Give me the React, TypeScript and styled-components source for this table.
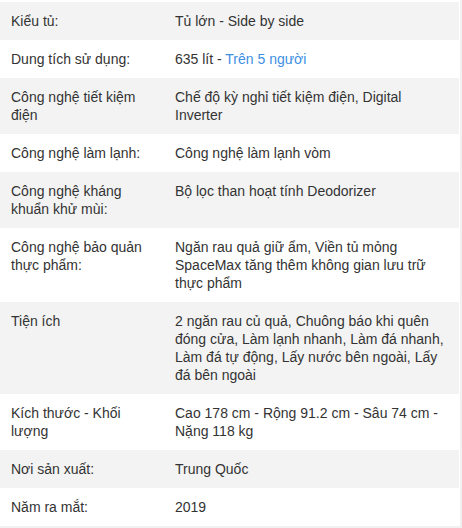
import React from "react";
import styled, { createGlobalStyle } from "styled-components";

const Global = createGlobalStyle`
  html, body { margin: 0; padding: 0; background: #f1f1f1; }
  body { font-family: "Liberation Sans", Arial, sans-serif; }
`;

const Wrapper = styled.div`
  width: 460px;
  padding-top: 2px;
  background: #ffffff;
`;

const Table = styled.ul`
  list-style: none;
  margin: 0;
  padding: 0;
  width: 459px;
`;

const Row = styled.li<{ $shaded: boolean }>`
  display: grid;
  grid-template-columns: 175px 1fr;
  background: ${(p) => (p.$shaded ? "#f3f3f3" : "#ffffff")};
  font-size: 14px;
  line-height: 18px;
  color: #333333;
`;

const Label = styled.div`
  padding: 10px 25px 10px 11px;
`;

const Value = styled.div`
  padding: 10px 10px 10px 0;
`;

const Link = styled.a`
  color: #3d8fe3;
  text-decoration: none;
`;

const rows: { label: string; value: React.ReactNode }[] = [
  { label: "Kiểu tủ:", value: "Tủ lớn - Side by side" },
  {
    label: "Dung tích sử dụng:",
    value: (
      <>
        635 lít - <Link href="#">Trên 5 người</Link>
      </>
    ),
  },
  { label: "Công nghệ tiết kiệm điện", value: "Chế độ kỳ nghỉ tiết kiệm điện, Digital Inverter" },
  { label: "Công nghệ làm lạnh:", value: "Công nghệ làm lạnh vòm" },
  { label: "Công nghệ kháng khuẩn khử mùi:", value: "Bộ lọc than hoạt tính Deodorizer" },
  {
    label: "Công nghệ bảo quản thực phẩm:",
    value: "Ngăn rau quả giữ ẩm, Viền tủ mỏng SpaceMax tăng thêm không gian lưu trữ thực phẩm",
  },
  {
    label: "Tiện ích",
    value:
      "2 ngăn rau củ quả, Chuông báo khi quên đóng cửa, Làm lạnh nhanh, Làm đá nhanh, Làm đá tự động, Lấy nước bên ngoài, Lấy đá bên ngoài",
  },
  { label: "Kích thước - Khối lượng", value: "Cao 178 cm - Rộng 91.2 cm - Sâu 74 cm - Nặng 118 kg" },
  { label: "Nơi sản xuất:", value: "Trung Quốc" },
  { label: "Năm ra mắt:", value: "2019" },
];

export default function App() {
  return (
    <>
      <Global />
      <Wrapper>
        <Table>
          {rows.map((r, i) => (
            <Row key={i} $shaded={i % 2 === 0}>
              <Label>{r.label}</Label>
              <Value>{r.value}</Value>
            </Row>
          ))}
        </Table>
      </Wrapper>
    </>
  );
}
